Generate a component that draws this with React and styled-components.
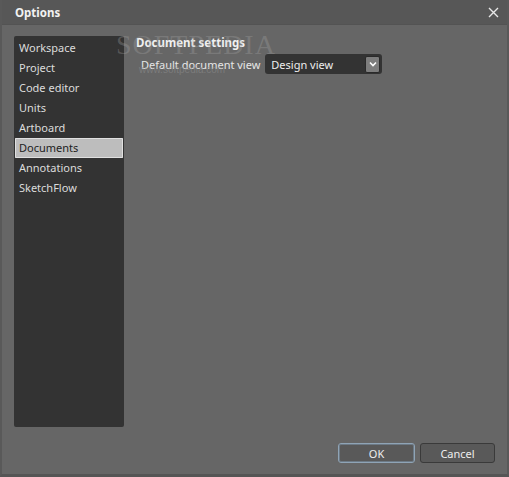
import React from 'react';
import styled, { createGlobalStyle } from 'styled-components';

const Global = createGlobalStyle`
    html, body { margin: 0; padding: 0; background: #5a5a5a; }
    body { font-family: "Noto Sans", "DejaVu Sans", sans-serif; }
`;

const Frame = styled.div`
    position: relative;
    width: 509px;
    height: 477px;
    box-sizing: border-box;
    background: #666;
    border-left: 2px solid #595959;
    border-right: 2px solid #595959;
    border-bottom: 3px solid #555;
    display: flex;
    flex-direction: column;
    overflow: hidden;
`;

const TitleBar = styled.div`
    height: 24px;
    flex: none;
    background: #575757;
    border-bottom: 1px solid #535353;
    display: flex;
    align-items: center;
    justify-content: space-between;
    padding: 0 10px 0 15px;
    margin: 0 -2px;
`;

const Title = styled.div`
    color: #f2f2f2;
    font-weight: bold;
    font-size: 11.5px;
`;

const Close = styled.div`
    width: 12px;
    height: 12px;
    display: flex;
    align-items: center;
    justify-content: center;
`;

const Body = styled.div`
    flex: 1;
    display: flex;
    flex-direction: column;
    padding: 11px 12px 11px 12px;
`;

const Main = styled.div`
    flex: 1;
    display: flex;
    gap: 12px;
`;

const Sidebar = styled.div`
    width: 110px;
    height: 391px;
    background: #333;
    border-radius: 2px;
    padding: 2px 1px;
    box-sizing: border-box;
`;

const Item = styled.div`
    height: 20px;
    line-height: 20px;
    padding-left: 4px;
    font-size: 11px;
    color: ${p => (p.active ? '#222' : '#dcdcdc')};
    background: ${p => (p.active ? '#bdbdbd' : 'transparent')};
    box-shadow: ${p => (p.active ? 'inset 0 0 0 1px #e0e0e0' : 'none')};
    border-radius: 1px;
`;

const Settings = styled.div`
    padding-top: 0px;
`;

const Heading = styled.div`
    color: #f0f0f0;
    font-weight: bold;
    font-size: 11.5px;
    line-height: 14px;
`;

const Row = styled.div`
    display: flex;
    align-items: center;
    gap: 5px;
    margin-top: 4px;
    padding-left: 5px;
`;

const Label = styled.span`
    color: #e6e6e6;
    font-size: 11px;
`;

const Select = styled.div`
    width: 117px;
    height: 20px;
    background: #333;
    border-radius: 3px;
    display: flex;
    align-items: center;
    justify-content: space-between;
    padding: 0 2px 0 6px;
    box-sizing: border-box;
    color: #eee;
    font-size: 11px;
`;

const Arrow = styled.div`
    width: 15px;
    height: 17px;
    background: #7d7d7d;
    border: 1px solid #2a2a2a;
    border-radius: 2px;
    display: flex;
    align-items: center;
    justify-content: center;
    box-sizing: border-box;
`;

const Footer = styled.div`
    display: flex;
    justify-content: flex-end;
    gap: 5px;
`;

const Button = styled.div`
    width: ${p => (p.wide ? '75px' : '77px')};
    height: 20px;
    box-sizing: border-box;
    border: 1px solid ${p => (p.primary ? '#8fa4b6' : '#3a3a3a')};
    box-shadow: ${p => (p.primary ? 'inset 0 0 0 1px #6d7a86' : 'none')};
    border-radius: 3px;
    background: #595959;
    color: #eee;
    font-size: 11px;
    display: flex;
    align-items: center;
    justify-content: center;
`;

const Watermark = styled.div`
    position: absolute;
    left: 114px;
    top: 29px;
    color: rgba(170, 170, 170, 0.3);
    font-family: "Liberation Serif", serif;
    font-size: 28px;
    letter-spacing: 1px;
    pointer-events: none;
`;

const WatermarkUrl = styled.div`
    position: absolute;
    left: 137px;
    top: 64px;
    color: rgba(140, 140, 140, 0.6);
    font-family: "Liberation Sans", sans-serif;
    font-size: 10px;
    pointer-events: none;
`;

const items = ['Workspace', 'Project', 'Code editor', 'Units', 'Artboard', 'Documents', 'Annotations', 'SketchFlow'];

const App = () => {
    return (
        <Frame>
            <Global />
            <TitleBar>
                <Title>Options</Title>
                <Close>
                    <svg width="11" height="11" viewBox="0 0 11 11">
                        <path d="M1 1 L10 10 M10 1 L1 10" stroke="#e8e8e8" strokeWidth="1.4" />
                    </svg>
                </Close>
            </TitleBar>
            <Body>
                <Main>
                    <Sidebar>
                        {items.map(i => (
                            <Item key={i} active={i === 'Documents'}>{i}</Item>
                        ))}
                    </Sidebar>
                    <Settings>
                        <Heading>Document settings</Heading>
                        <Row>
                            <Label>Default document view</Label>
                            <Select>
                                Design view
                                <Arrow>
                                    <svg width="8" height="6" viewBox="0 0 8 6">
                                        <path d="M1 1.5 L4 4.5 L7 1.5" stroke="#fff" strokeWidth="1.6" fill="none" />
                                    </svg>
                                </Arrow>
                            </Select>
                        </Row>
                    </Settings>
                </Main>
                <Footer>
                    <Button primary>OK</Button>
                    <Button wide>Cancel</Button>
                </Footer>
            </Body>
            <Watermark>SOFTPEDIA</Watermark>
            <WatermarkUrl>www.softpedia.com</WatermarkUrl>
        </Frame>
    );
};

export default App;
